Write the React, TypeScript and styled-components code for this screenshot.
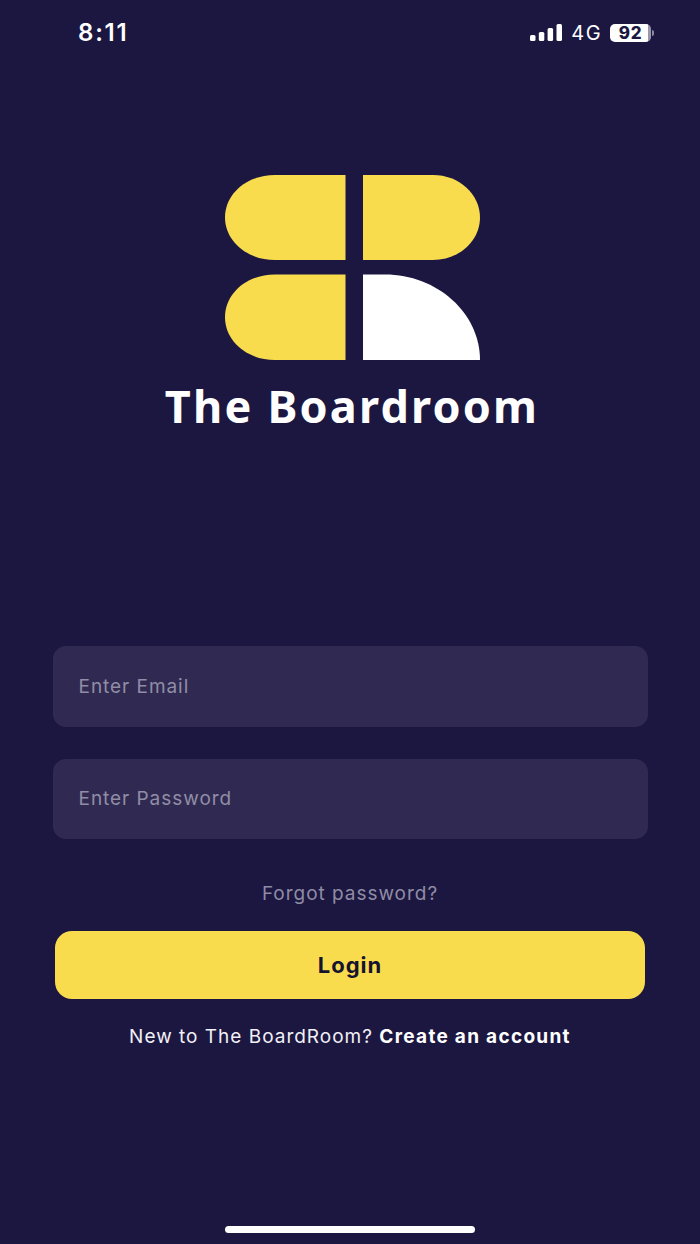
import React from "react";
import styled, { createGlobalStyle } from "styled-components";

const GlobalStyle = createGlobalStyle`
  html, body {
    margin: 0;
    padding: 0;
    background: #1c1741;
  }
  * {
    box-sizing: border-box;
  }
`;

const Screen = styled.div`
  width: 700px;
  height: 1244px;
  background: #1c1741;
  display: flex;
  flex-direction: column;
  align-items: center;
  font-family: Inter, "Liberation Sans", sans-serif;
  overflow: hidden;
`;

const StatusBar = styled.div`
  width: 100%;
  height: 66px;
  padding: 18px 46px 0 78px;
  display: flex;
  justify-content: space-between;
  align-items: flex-start;
  color: #fff;
`;

const Time = styled.span`
  font-size: 24px;
  line-height: 29px;
  font-weight: 600;
  letter-spacing: 1.8px;
`;

const StatusRight = styled.div`
  display: flex;
  align-items: center;
  height: 29px;
`;

const Network = styled.span`
  font-size: 20px;
  font-weight: 400;
  letter-spacing: 1.4px;
  margin: 0 8px 0 9px;
`;

const Battery = styled.span`
  width: 41px;
  height: 18px;
  border-radius: 5px;
  background: linear-gradient(90deg, #fff 92%, #9a97ac 92%);
  color: #1c1741;
  font-size: 17px;
  line-height: 18px;
  font-weight: 800;
  letter-spacing: 0.8px;
  text-align: center;
`;

const BatteryCap = styled.span`
  width: 2px;
  height: 6px;
  margin-left: 1px;
  border-radius: 0 2px 2px 0;
  background: #8d8aa0;
`;

const Brand = styled.div`
  margin-top: 109px;
  display: flex;
  flex-direction: column;
  align-items: center;
`;

const LogoMark = styled.svg`
  display: block;
  width: 255px;
  height: 185px;
  margin-left: 5px;
`;

const BrandName = styled.h1`
  margin: 16px 0 0 4px;
  font-family: "Noto Sans", "Open Sans", sans-serif;
  font-size: 45px;
  line-height: 60px;
  font-weight: 700;
  letter-spacing: 2.2px;
  color: #fff;
  white-space: nowrap;
`;

const Form = styled.form`
  margin-top: 210px;
  width: 595px;
  display: flex;
  flex-direction: column;
  align-items: center;
`;

const Field = styled.input`
  width: 100%;
  height: 80.5px;
  margin-bottom: 32px;
  padding: 0 26px;
  border: 0;
  border-radius: 13px;
  outline: none;
  background: #302a52;
  color: #fff;
  font-family: inherit;
  font-size: 19px;
  letter-spacing: 0.96px;

  &::placeholder {
    color: #908da6;
    opacity: 1;
  }
`;

const Forgot = styled.a`
  margin-top: 10px;
  font-size: 19px;
  line-height: 26px;
  letter-spacing: 0.97px;
  color: #8f8ca4;
`;

const LoginButton = styled.button`
  width: 590px;
  height: 68px;
  margin-top: 24px;
  border: 0;
  border-radius: 17px;
  background: #f9dc4e;
  color: #16132f;
  font-family: inherit;
  font-size: 22px;
  font-weight: 700;
  letter-spacing: 1px;
`;

const SignUp = styled.p`
  margin: 25px 0 0;
  font-size: 19px;
  line-height: 26px;
  letter-spacing: 1px;
  color: #f1f0f5;

  b {
    font-weight: 700;
    letter-spacing: 1.3px;
    color: #fff;
  }
`;

const HomeIndicator = styled.div`
  margin-top: auto;
  margin-bottom: 11px;
  width: 250px;
  height: 7px;
  border-radius: 4px;
  background: #fff;
`;

function SignalBars() {
  return (
    <svg width="32" height="17" viewBox="0 0 32 17" fill="#fff">
      <rect x="0" y="11" width="5.5" height="6" rx="1.5" />
      <rect x="8.8" y="8" width="5.5" height="9" rx="1.5" />
      <rect x="17.6" y="4" width="5.5" height="13" rx="1.5" />
      <rect x="26.5" y="0" width="5.5" height="17" rx="1.5" />
    </svg>
  );
}

function Logo() {
  return (
    <LogoMark viewBox="0 0 255 185">
      <path
        fill="#f9dc4e"
        d="M50 0H120.5V85H50C22 85 0 66 0 42.5S22 0 50 0Z"
      />
      <path
        fill="#f9dc4e"
        d="M138 0H208C234 0 255 19 255 42.5S234 85 208 85H138Z"
      />
      <path
        fill="#f9dc4e"
        d="M50 99.5H120.5V185H50C22 185 0 166 0 142.25S22 99.5 50 99.5Z"
      />
      <path fill="#fff" d="M138 99.5H160C212 99.5 255 138 255 185H138Z" />
    </LogoMark>
  );
}

export default function App() {
  return (
    <Screen>
      <GlobalStyle />
      <StatusBar>
        <Time>8:11</Time>
        <StatusRight>
          <SignalBars />
          <Network>4G</Network>
          <Battery>92</Battery>
          <BatteryCap />
        </StatusRight>
      </StatusBar>
      <Brand>
        <Logo />
        <BrandName>The Boardroom</BrandName>
      </Brand>
      <Form>
        <Field placeholder="Enter Email" />
        <Field placeholder="Enter Password" type="password" />
        <Forgot>Forgot password?</Forgot>
        <LoginButton type="button">Login</LoginButton>
        <SignUp>
          New to The BoardRoom? <b>Create an account</b>
        </SignUp>
      </Form>
      <HomeIndicator />
    </Screen>
  );
}
